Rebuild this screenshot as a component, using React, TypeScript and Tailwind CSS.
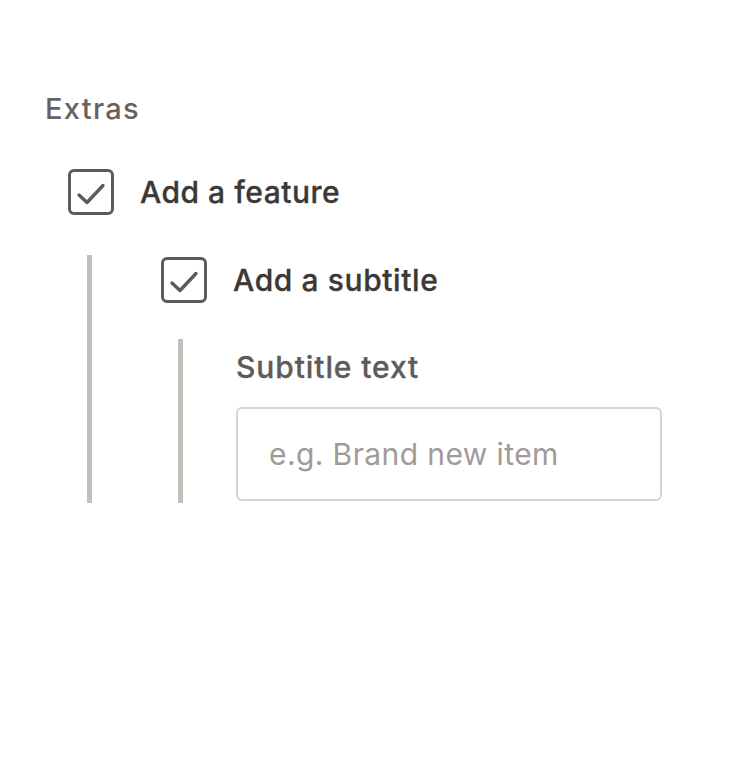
import { useState } from 'react';

function CheckBox({ checked, onToggle }: { checked: boolean; onToggle: () => void }) {
  return (
    <button
      type="button"
      onClick={onToggle}
      className="w-[46px] h-[46px] shrink-0 rounded-[6px] border-[3px] border-[#5f5a57] bg-white flex items-center justify-center"
    >
      {checked && (
        <svg width="40" height="40" viewBox="0 0 40 40" fill="none">
          <path d="M8 23 L16 30.5 L32 13.5" stroke="#5f5a57" strokeWidth="3.4" strokeLinecap="round" strokeLinejoin="round" />
        </svg>
      )}
    </button>
  );
}

export default function App() {
  const [feature, setFeature] = useState(true);
  const [subtitle, setSubtitle] = useState(true);
  const [text, setText] = useState('');

  return (
    <div className="w-full min-h-[774px] bg-white pt-[90px] pl-[45px] font-['Inter',sans-serif]">
      <h2 className="text-[29px] leading-[38px] font-medium tracking-[1.3px] text-[#67625f]">Extras</h2>

      <div className="ml-[23px] mt-[41px] flex items-center gap-[26px]">
        <CheckBox checked={feature} onToggle={() => setFeature(!feature)} />
        <span className="text-[30px] font-medium tracking-[0.5px] text-[#3b3836] [-webkit-text-stroke:0.3px_#3b3836]">Add a feature</span>
      </div>

      {feature && (
        <div className="ml-[42px] mt-[40px] border-l-[5px] border-[#c4bfb9] pl-[69px]">
          <div className="pt-[2px] flex items-center gap-[26px]">
            <CheckBox checked={subtitle} onToggle={() => setSubtitle(!subtitle)} />
            <span className="text-[30px] font-medium tracking-[0.6px] text-[#3b3836] [-webkit-text-stroke:0.3px_#3b3836]">Add a subtitle</span>
          </div>

          {subtitle && (
            <div className="ml-[17px] mt-[36px] border-l-[5px] border-[#c4bfb9] pl-[53px] pb-[2px]">
              <label className="block pt-[8px] text-[30px] font-medium tracking-[0.9px] leading-[40px] text-[#5f5b58] [-webkit-text-stroke:0.3px_#5f5b58]">Subtitle text</label>
              <input
                type="text"
                value={text}
                onChange={(e) => setText(e.target.value)}
                placeholder="e.g. Brand new item"
                className="mt-[20px] block w-[426px] h-[94px] rounded-[6px] border-2 border-[#d6d3d0] px-[31px] text-[30px] tracking-[0.4px] text-[#3b3836] placeholder:text-[#a19b97] focus:outline-none"
              />
            </div>
          )}
        </div>
      )}
    </div>
  );
}
